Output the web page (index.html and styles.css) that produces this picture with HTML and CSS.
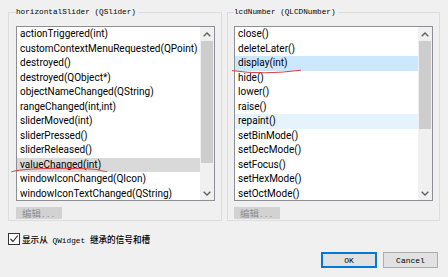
FILE: index.html
```html
<!DOCTYPE html>
<html>
<head>
<meta charset="utf-8">
<link rel="stylesheet" href="styles.css">
</head>
<body>
<div class="dialog">
  <div class="groups">
    <section class="group group-left">
      <div class="group-title">horizontalSlider (QSlider)</div>
      <div class="listbox">
        <ul class="items">
          <li>actionTriggered(int)</li>
          <li>customContextMenuRequested(QPoint)</li>
          <li>destroyed()</li>
          <li>destroyed(QObject*)</li>
          <li>objectNameChanged(QString)</li>
          <li>rangeChanged(int,int)</li>
          <li>sliderMoved(int)</li>
          <li>sliderPressed()</li>
          <li>sliderReleased()</li>
          <li class="sel-grey">valueChanged(int)</li>
          <li>windowIconChanged(QIcon)</li>
          <li>windowIconTextChanged(QString)</li>
        </ul>
        <div class="scrollbar">
          <div class="arrow"><svg width="8" height="5" viewBox="0 0 8 5"><path d="M0.7 4.3 L4 1 L7.3 4.3" fill="none" stroke="#606060" stroke-width="1.4"/></svg></div>
          <div class="track"><div class="thumb" style="height:122px"></div></div>
          <div class="arrow"><svg width="8" height="5" viewBox="0 0 8 5"><path d="M0.7 0.7 L4 4 L7.3 0.7" fill="none" stroke="#606060" stroke-width="1.4"/></svg></div>
        </div>
      </div>
      <div class="edit-btn"><span class="cjk">编辑</span>...</div>
    </section>
    <section class="group group-right">
      <div class="group-title">lcdNumber (QLCDNumber)</div>
      <div class="listbox">
        <ul class="items">
          <li>close()</li>
          <li>deleteLater()</li>
          <li class="sel-blue">display(int)</li>
          <li>hide()</li>
          <li>lower()</li>
          <li>raise()</li>
          <li class="hover">repaint()</li>
          <li>setBinMode()</li>
          <li>setDecMode()</li>
          <li>setFocus()</li>
          <li>setHexMode()</li>
          <li>setOctMode()</li>
        </ul>
        <div class="scrollbar">
          <div class="arrow"><svg width="8" height="5" viewBox="0 0 8 5"><path d="M0.7 4.3 L4 1 L7.3 4.3" fill="none" stroke="#606060" stroke-width="1.4"/></svg></div>
          <div class="track"><div class="thumb" style="height:88px"></div></div>
          <div class="arrow"><svg width="8" height="5" viewBox="0 0 8 5"><path d="M0.7 0.7 L4 4 L7.3 0.7" fill="none" stroke="#606060" stroke-width="1.4"/></svg></div>
        </div>
      </div>
      <div class="edit-btn"><span class="cjk">编辑</span>...</div>
    </section>
  </div>
  <label class="check">
    <span class="box"><svg width="10" height="10" viewBox="0 0 10 10"><path d="M1.5 5 L4 7.5 L8.8 1.5" fill="none" stroke="#222" stroke-width="1.1"/></svg></span>
    <span class="check-text"><span class="cjk">显示从</span> QWidget <span class="cjk">继承的信号和槽</span></span>
  </label>
  <div class="buttons">
    <div class="btn btn-default">OK</div>
    <div class="btn">Cancel</div>
  </div>
  <svg class="marks" width="448" height="277" viewBox="0 0 448 277">
    <path d="M11.5 171.8 C 22 168.4, 55 168, 80 168.6 S 99 171.2, 107 171.6" fill="none" stroke="#e2383a" stroke-width="1"/>
    <path d="M232 70.6 Q 263 75.2 301 70.2" fill="none" stroke="#e2383a" stroke-width="1"/>
  </svg>
</div>
</body>
</html>
```

FILE: styles.css
```css
* { box-sizing: border-box; }
html, body { margin: 0; padding: 0; }
body {
  background: #f0f0f0;
  width: 448px;
  height: 277px;
  overflow: hidden;
  font-family: "Roboto", "Noto Sans CJK SC", sans-serif;
}
.dialog {
  position: relative;
  width: 448px;
  height: 277px;
  padding: 12px 8px 0 8px;
}
.groups {
  display: flex;
  gap: 5px;
}
.group {
  border: 1px solid #dcdcdc;
  height: 209px;
  padding: 0 6px 0 7px;
}
.group-left { width: 214px; }
.group-right { width: 213px; padding-left: 6px; }
.group-title {
  margin-top: -6px;
  height: 10px;
  line-height: 10px;
  width: fit-content;
  padding: 0 2px 0 0;
  background: #f0f0f0;
  font-family: "Liberation Mono", "Noto Sans CJK SC", monospace;
  font-size: 7.7px;
  color: #000;
  white-space: pre;
}
.listbox {
  margin-top: 9px;
  height: 175px;
  border: 1px solid #8c8f94;
  background: #fff;
  display: flex;
  overflow: hidden;
}
.items {
  list-style: none;
  margin: 0;
  padding: 0;
  flex: 1;
  min-width: 0;
}
.items li {
  height: 14.5px;
  line-height: 14.5px;
  padding-left: 3px;
  font-size: 10px;
  color: #000;
  white-space: nowrap;
}
.items li.sel-grey { background: #d9d9d9; }
.items li.sel-blue { background: #cce8ff; }
.items li.hover { background: #e5f3ff; }
.scrollbar {
  width: 14px;
  background: #f0f0f0;
  display: flex;
  flex-direction: column;
}
.arrow {
  height: 14px;
  display: flex;
  align-items: center;
  justify-content: center;
}
.track {
  flex: 1;
  padding: 0 1px;
}
.thumb {
  background: #cdcdcd;
}
.edit-btn {
  margin-top: 6px;
  width: 46px;
  height: 12px;
  background: #d2d2d2;
  color: #8e8e8e;
  font-family: "Liberation Mono", monospace;
  font-size: 8px;
  line-height: 12px;
  padding-left: 6px;
  overflow: hidden;
  white-space: nowrap;
}
.edit-btn .cjk {
  font-family: "Noto Sans CJK SC", sans-serif;
  font-size: 9.5px;
}
.check {
  display: flex;
  align-items: center;
  margin-top: 12px;
  height: 12px;
}
.box {
  width: 12px;
  height: 12px;
  border: 1px solid #333;
  background: #fff;
  display: flex;
  align-items: center;
  justify-content: center;
}
.check-text {
  margin-left: 2px;
  font-family: "Liberation Mono", "Noto Sans CJK SC", monospace;
  font-size: 7.8px;
  color: #000;
  white-space: pre;
}
.check-text .cjk {
  font-family: "Noto Sans CJK SC", sans-serif;
  font-size: 8.6px;
  font-weight: 500;
}
.buttons {
  display: flex;
  justify-content: flex-end;
  gap: 6px;
  margin-top: 7px;
  padding-right: 2px;
}
.btn {
  width: 55px;
  height: 16px;
  border: 1px solid #adadad;
  background: #e1e1e1;
  display: flex;
  align-items: center;
  justify-content: center;
  font-family: "Liberation Mono", monospace;
  font-size: 8px;
  color: #000;
}
.btn-default {
  width: 56px;
  border: 2px solid #0078d7;
}
.marks {
  position: absolute;
  left: 0;
  top: 0;
  pointer-events: none;
}
```
